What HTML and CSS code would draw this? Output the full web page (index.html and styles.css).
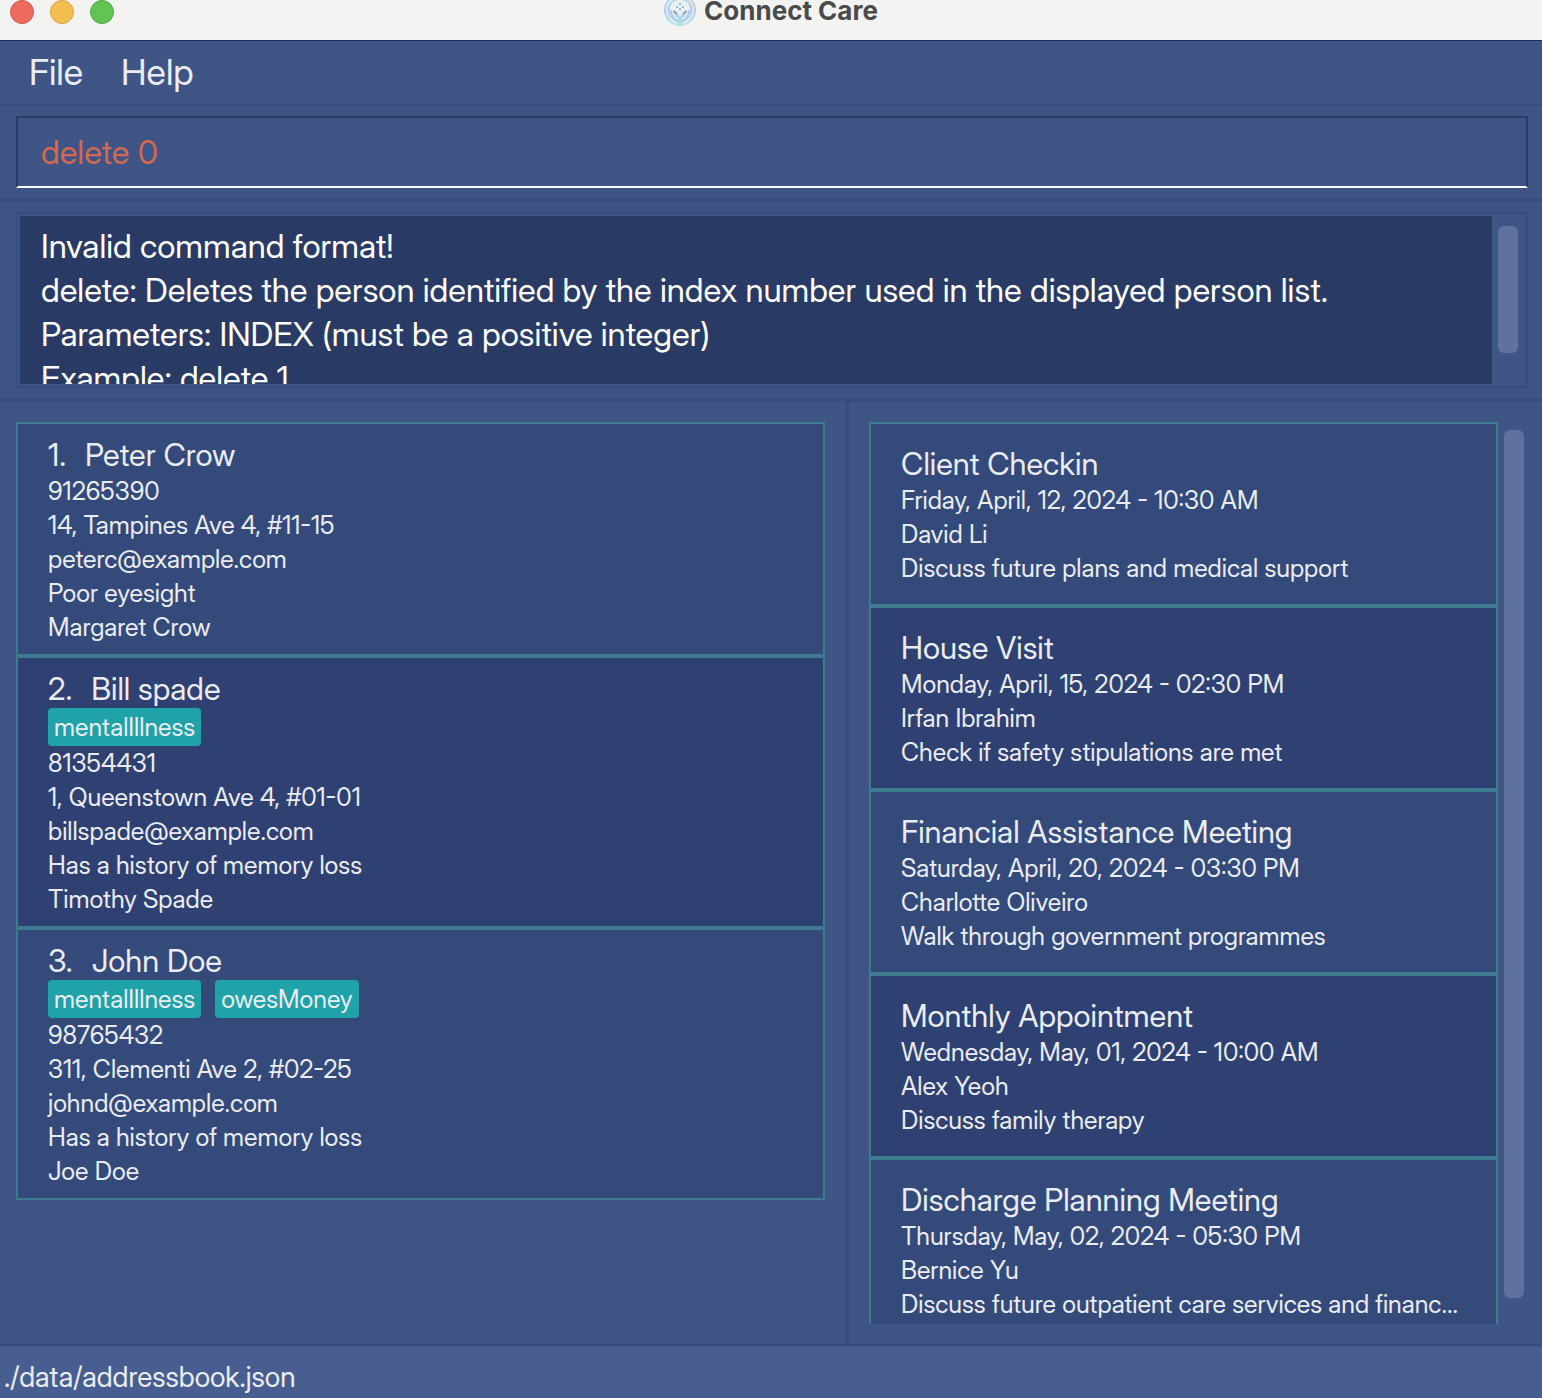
FILE: index.html
```html
<!DOCTYPE html>
<html lang="en">
<head>
<meta charset="utf-8">
<title>Connect Care</title>
<link rel="stylesheet" href="styles.css">
</head>
<body>
<div class="window">
  <header class="titlebar">
    <div class="lights">
      <button class="light light-close" type="button" aria-label="Close"></button>
      <button class="light light-minimize" type="button" aria-label="Minimize"></button>
      <button class="light light-zoom" type="button" aria-label="Zoom"></button>
    </div>
    <h1 class="app-title">
      <svg class="app-icon" viewBox="0 6 32 26" aria-hidden="true">
        <defs>
          <linearGradient id="ring" x1="0" y1="0" x2="0" y2="1">
            <stop offset="0" stop-color="#b5e2e4"/>
            <stop offset="0.5" stop-color="#a9cbee"/>
            <stop offset="1" stop-color="#b5ddec"/>
          </linearGradient>
          <linearGradient id="stem" x1="0" y1="0" x2="0" y2="1">
            <stop offset="0" stop-color="#b4c9ee"/>
            <stop offset="1" stop-color="#a8e6d4"/>
          </linearGradient>
        </defs>
        <circle cx="16" cy="16" r="15" fill="#e9f0f1" stroke="url(#ring)" stroke-width="2"/>
        <circle cx="16" cy="16" r="11.500" fill="none" stroke="url(#ring)" stroke-width="2"/>
        <path d="M7 16C7 23 11 26 15 28M25 16C25 23 21 26 17 28" fill="none" stroke="#a7bfeb" stroke-width="1.5"/>
        <path d="M16 23C14 19 11 17 9 17C10 21 12 23 14 25L14 31H18L18 25C20 23 22 21 23 17C21 17 18 19 16 23Z" fill="url(#stem)"/>
        <path d="M9 17L13 19.500M23 17L19 19.500" stroke="#73879a" stroke-width="1.2"/>
        <path d="M15 9h2v2h-2zM12 12h2v2h-2zM18 12h2v2h-2zM15 14h2v2h-2z" fill="#8fc0ea"/>
        <path d="M24 5Q29 8 30 14" fill="none" stroke="#f4d3c3" stroke-width="2"/>
      </svg>
      Connect Care
    </h1>
  </header>

  <nav class="menubar">
    <button class="menu" type="button">File</button>
    <button class="menu" type="button">Help</button>
  </nav>

  <div class="command-pane">
    <input class="command" type="text" value="delete 0" aria-label="Command" spellcheck="false">
  </div>

  <div class="result-pane">
    <div class="result-frame">
      <textarea class="result" readonly aria-label="Result" spellcheck="false">Invalid command format!
delete: Deletes the person identified by the index number used in the displayed person list.
Parameters: INDEX (must be a positive integer)
Example: delete 1</textarea>
      <div class="track result-track"><div class="thumb result-thumb"></div></div>
    </div>
  </div>

  <main class="lists">
    <section class="persons" aria-label="Persons">
      <ul class="cards">
        <li class="card person">
          <h2 class="name"><span class="index">1.</span>Peter Crow</h2>
          <p>91265390</p>
          <p>14, Tampines Ave 4, #11-15</p>
          <p>peterc@example.com</p>
          <p>Poor eyesight</p>
          <p>Margaret Crow</p>
        </li>
        <li class="card person">
          <h2 class="name"><span class="index">2.</span>Bill spade</h2>
          <div class="tags"><span class="tag">mentalIllness</span></div>
          <p>81354431</p>
          <p>1, Queenstown Ave 4, #01-01</p>
          <p>billspade@example.com</p>
          <p>Has a history of memory loss</p>
          <p>Timothy Spade</p>
        </li>
        <li class="card person">
          <h2 class="name"><span class="index">3.</span>John Doe</h2>
          <div class="tags"><span class="tag">mentalIllness</span><span class="tag">owesMoney</span></div>
          <p>98765432</p>
          <p>311, Clementi Ave 2, #02-25</p>
          <p>johnd@example.com</p>
          <p>Has a history of memory loss</p>
          <p>Joe Doe</p>
        </li>
      </ul>
    </section>

    <section class="appointments" aria-label="Appointments">
      <ul class="cards">
        <li class="card appointment">
          <h2 class="name">Client Checkin</h2>
          <p>Friday, April, 12, 2024 - 10:30 AM</p>
          <p>David Li</p>
          <p>Discuss future plans and medical support</p>
        </li>
        <li class="card appointment">
          <h2 class="name">House Visit</h2>
          <p>Monday, April, 15, 2024 - 02:30 PM</p>
          <p>Irfan Ibrahim</p>
          <p>Check if safety stipulations are met</p>
        </li>
        <li class="card appointment">
          <h2 class="name">Financial Assistance Meeting</h2>
          <p>Saturday, April, 20, 2024 - 03:30 PM</p>
          <p>Charlotte Oliveiro</p>
          <p>Walk through government programmes</p>
        </li>
        <li class="card appointment">
          <h2 class="name">Monthly Appointment</h2>
          <p>Wednesday, May, 01, 2024 - 10:00 AM</p>
          <p>Alex Yeoh</p>
          <p>Discuss family therapy</p>
        </li>
        <li class="card appointment">
          <h2 class="name">Discharge Planning Meeting</h2>
          <p>Thursday, May, 02, 2024 - 05:30 PM</p>
          <p>Bernice Yu</p>
          <p>Discuss future outpatient care services and financ...</p>
        </li>
      </ul>
      <div class="track list-track"><div class="thumb list-thumb"></div></div>
    </section>
  </main>

  <footer class="statusbar">./data/addressbook.json</footer>
</div>
</body>
</html>
```
FILE: styles.css
```css
* { box-sizing: border-box; }

body {
  margin: 0;
  background: #3f5585;
  color: #ebecf1;
  font-family: "Inter Display", Inter, "Liberation Sans", sans-serif;
  font-weight: 400;
}

h1, h2, p, ul { margin: 0; padding: 0; font-weight: inherit; }
ul { list-style: none; }
button, input, textarea { font: inherit; color: inherit; border: 0; margin: 0; background: none; border-radius: 0; outline: none; }

.window {
  height: 100vh;
  display: flex;
  flex-direction: column;
}

.titlebar {
  flex: none;
  display: grid;
  grid-template-columns: 1fr auto 1fr;
  align-items: start;
  height: 41px;
  padding: 0 10px;
  background: #f3f3f1;
  border-bottom: 1px solid #1c2f5f;
}
.lights { display: flex; gap: 16px; }
.light { width: 24px; height: 24px; padding: 0; border-radius: 50%; border: 1px solid; }
.light-close { background: #ed6a5e; border-color: #d5564b; }
.light-minimize { background: #f5bf4f; border-color: #d9a13c; }
.light-zoom { background: #61c554; border-color: #4ca73d; }
.app-title {
  display: flex;
  gap: 8px;
  color: #4a4a4a;
  font-family: Inter, "Liberation Sans", sans-serif;
  font-size: 26px;
  line-height: 22px;
  font-weight: 700;
}
.app-icon { width: 32px; height: 26px; }

.menubar {
  flex: none;
  display: flex;
  gap: 38px;
  padding: 0 29px;
  border-bottom: 2px solid #374d7d;
}
.menu { padding: 0; font-size: 36px; line-height: 63px; }

.command-pane {
  flex: none;
  padding: 10px 14px 10px 16px;
  border-bottom: 4px solid #374d7d;
}
.command {
  display: block;
  width: 100%;
  height: 72px;
  padding: 0 23px;
  border: 2px solid #293a66;
  border-bottom-color: #fff;
  color: #d36951;
  font-size: 33px;
}

.result-pane {
  flex: none;
  padding: 10px 14px 10px 16px;
  border-bottom: 4px solid #374d7d;
}
.result-frame {
  display: flex;
  height: 176px;
  padding: 2px 8px 2px 2px;
  gap: 6px;
  border: 2px solid #374d7d;
}
.result {
  flex: 1;
  min-width: 0;
  padding: 8px 21px 0;
  background: #293a65;
  color: #fff;
  font-size: 33px;
  line-height: 44px;
  resize: none;
  overflow: hidden;
}
.track { flex: none; width: 20px; }
.thumb { background: #5f719f; border-radius: 6px; }
.result-track { padding: 10px 0; }
.result-thumb { height: 86%; }

.lists {
  flex: 1;
  min-height: 0;
  display: grid;
  grid-template-columns: minmax(0, 845fr) minmax(0, 697fr);
}
.persons { min-height: 0; overflow: hidden; padding: 20px 20px 20px 16px; }
.appointments {
  display: flex;
  gap: 6px;
  min-height: 0;
  padding: 20px 18px 20px 20px;
  border-left: 4px solid #374d7d;
}
.appointments .cards { flex: 1; min-width: 0; overflow: hidden; }
.list-track { padding: 8px 0; }
.list-thumb { height: 98%; }

.card {
  padding: 12px 28px 10px 30px;
  border: 2px solid #3e7b91;
  background: #334a7b;
  font-size: 25px;
  line-height: 34px;
}
.card:nth-child(even) { background: #2f4172; }
.card p { white-space: nowrap; }
.appointment p { overflow: hidden; text-overflow: ellipsis; }
.appointment { padding-top: 21px; padding-bottom: 19px; }
.name { font-size: 31px; line-height: 38px; }
.index { margin-right: 19px; }
.tags { display: flex; gap: 14px; }
.tag { padding: 2px 6px; border-radius: 4px; background: #1fa2a8; }

.statusbar {
  flex: none;
  height: 54px;
  padding: 10px 4px 0;
  border-top: 2px solid #374d7d;
  background: #485e90;
  font-size: 28px;
  line-height: 42px;
}
```
